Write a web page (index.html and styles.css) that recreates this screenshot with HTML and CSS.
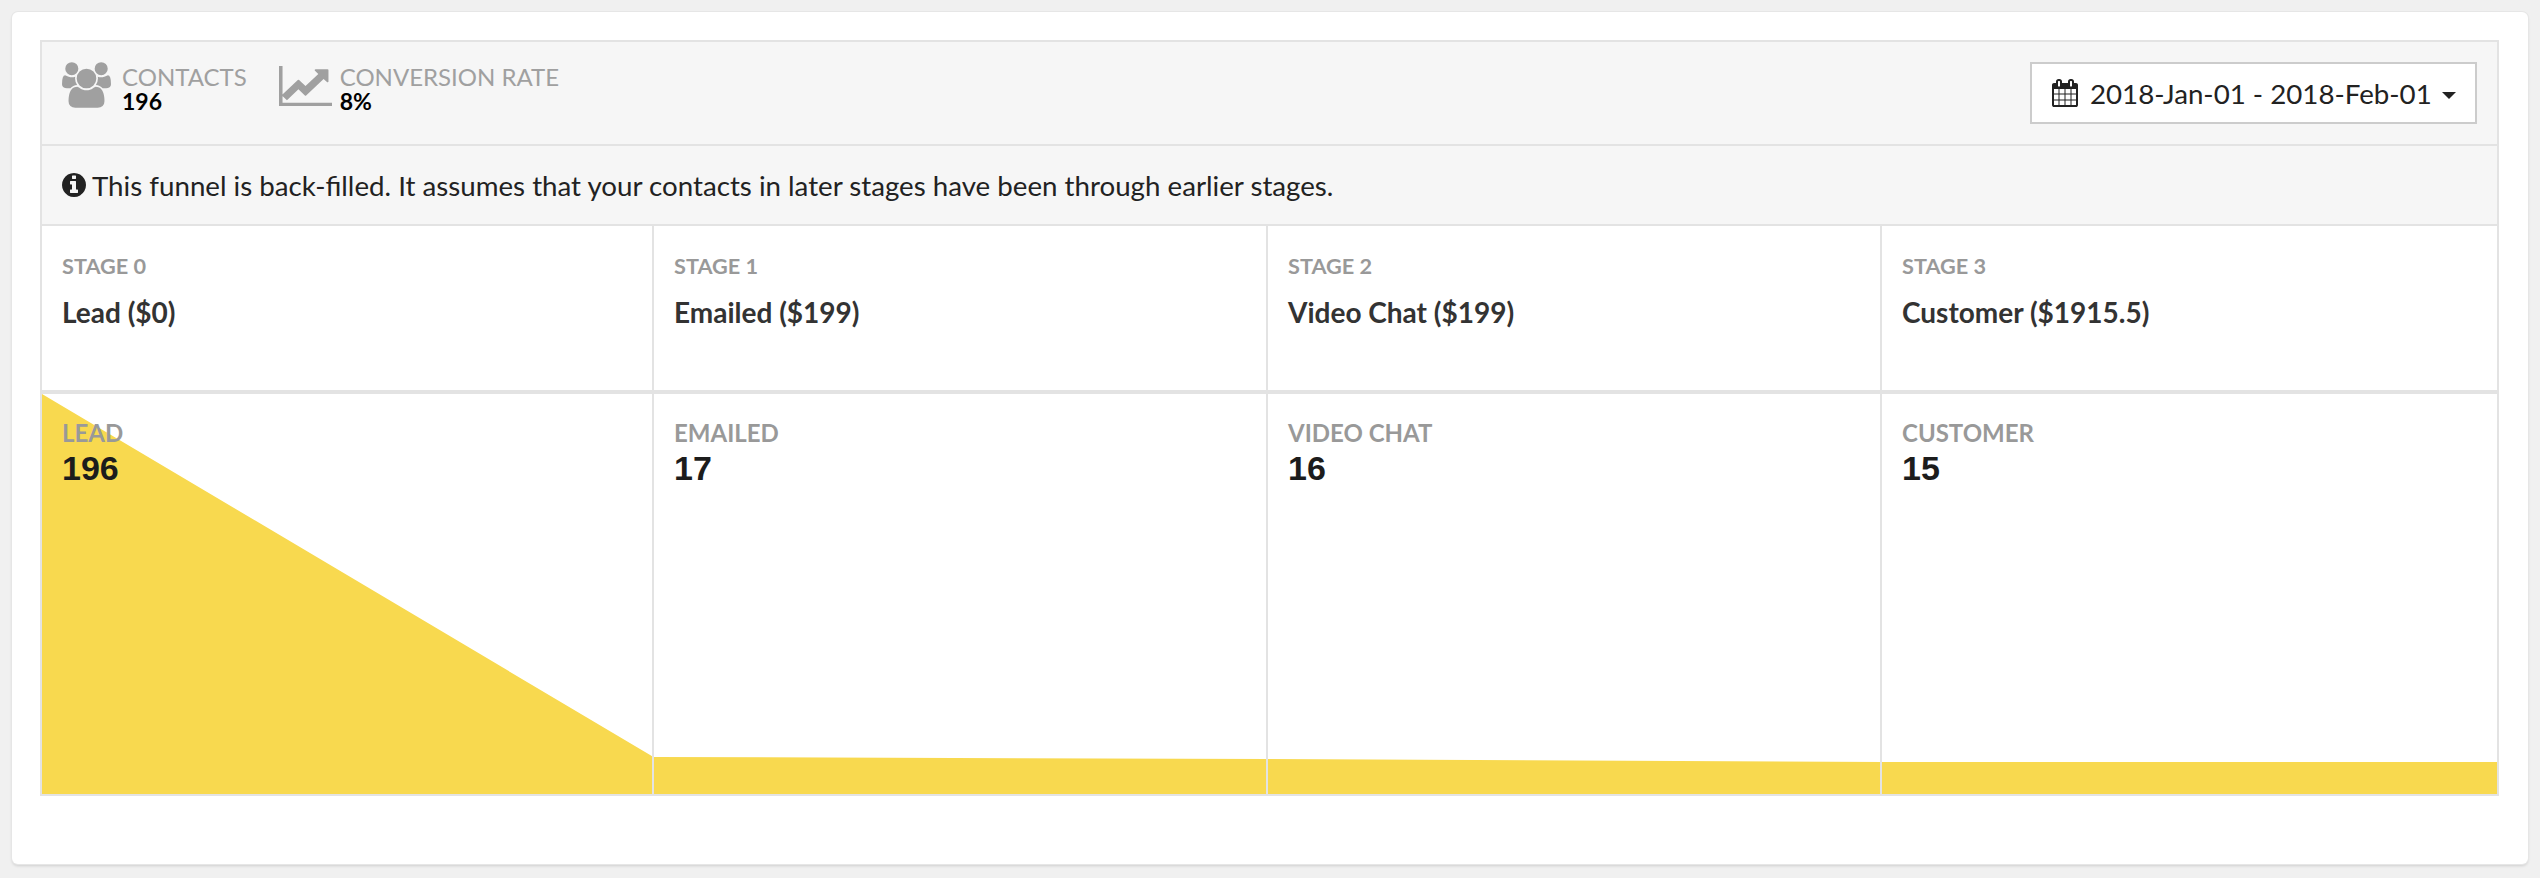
FILE: index.html
```html
<!DOCTYPE html>
<html lang="en">
<head>
<meta charset="utf-8">
<title>Funnel</title>
<link rel="stylesheet" href="styles.css">
</head>
<body>
<main class="card">
  <section class="box">
    <header class="toolbar">
      <div class="metrics">
        <div class="metric">
          <svg class="icon-users" viewBox="0 0 1920 1792"><path d="M593 896q-162 5-265 128h-134q-82 0-138-40.500t-56-118.500q0-353 124-353 6 0 43.500 21t97.500 42.500 119 21.500q67 0 133-23-5 37-5 66 0 139 81 256zm1071 637q0 120-73 189.500t-194 69.500h-874q-121 0-194-69.500t-73-189.500q0-53 3.500-103.500t14-109 26.500-108.500 43-97.500 62-81 85.500-53.500 111.500-20q10 0 43 21.500t73 48 107 48 135 21.500 135-21.500 107-48 73-48 43-21.500q61 0 111.500 20t85.500 53.500 62 81 43 97.500 26.500 108.500 14 109 3.500 103.500zm-1024-1277q0 106-75 181t-181 75-181-75-75-181 75-181 181-75 181 75 75 181zm704 384q0 159-112.500 271.500t-271.500 112.500-271.500-112.500-112.500-271.500 112.500-271.500 271.500-112.500 271.500 112.500 112.500 271.500zm576 225q0 78-56 118.500t-138 40.500h-134q-103-123-265-128 81-117 81-256 0-29-5-66 66 23 133 23 59 0 119-21.500t97.500-42.500 43.500-21q124 0 124 353zm-128-609q0 106-75 181t-181 75-181-75-75-181 75-181 181-75 181 75 75 181z"/></svg>
          <div class="metric-text"><span class="metric-label">CONTACTS</span><strong class="metric-value">196</strong></div>
        </div>
        <div class="metric">
          <svg class="icon-chart" viewBox="0 128 1920 1536" preserveAspectRatio="none"><path d="M1920 1536v128h-1920v-1536h128v1408h1792zm-128-1248v435q0 21-19.500 29.500t-35.500-7.500l-121-121-633 633q-10 10-23 10t-23-10l-233-233-416 416-192-192 585-585q10-10 23-10t23 10l233 233 464-464-121-121q-16-16-7.500-35.500t29.500-19.500h435q14 0 23 9t9 23z"/></svg>
          <div class="metric-text"><span class="metric-label">CONVERSION RATE</span><strong class="metric-value">8%</strong></div>
        </div>
      </div>
      <button class="date-button" type="button">
        <svg class="icon-calendar" viewBox="0 0 1664 1792"><path d="M128 1664h288v-288h-288v288zm352 0h320v-288h-320v288zm-352-352h288v-320h-288v320zm352 0h320v-320h-320v320zm-352-384h288v-288h-288v288zm736 736h320v-288h-320v288zm-384-736h320v-288h-320v288zm768 736h288v-288h-288v288zm-384-352h320v-320h-320v320zm-352-864v-288q0-13-9.500-22.500t-22.500-9.500h-64q-13 0-22.500 9.500t-9.500 22.500v288q0 13 9.500 22.500t22.500 9.500h64q13 0 22.500-9.500t9.500-22.500zm736 864h288v-320h-288v320zm-384-384h320v-288h-320v288zm384 0h288v-288h-288v288zm32-480v-288q0-13-9.500-22.500t-22.500-9.500h-64q-13 0-22.500 9.500t-9.500 22.500v288q0 13 9.500 22.500t22.500 9.500h64q13 0 22.500-9.500t9.500-22.500zm384-64v1280q0 52-38 90t-90 38h-1408q-52 0-90-38t-38-90v-1280q0-52 38-90t90-38h128v-96q0-66 47-113t113-47h64q66 0 113 47t47 113v96h384v-96q0-66 47-113t113-47h64q66 0 113 47t47 113v96h128q52 0 90 38t38 90z"/></svg>
        <span>2018-Jan-01 - 2018-Feb-01</span>
        <i class="caret"></i>
      </button>
    </header>
    <div class="notice">
      <svg class="icon-info" viewBox="0 128 1536 1536"><path d="M1024 1376v-160q0-14-9-23t-23-9h-96v-512q0-14-9-23t-23-9h-320q-14 0-23 9t-9 23v160q0 14 9 23t23 9h96v320h-96q-14 0-23 9t-9 23v160q0 14 9 23t23 9h448q14 0 23-9t9-23zm-128-896v-160q0-14-9-23t-23-9h-192q-14 0-23 9t-9 23v160q0 14 9 23t23 9h192q14 0 23-9t9-23zm640 416q0 209-103 385.500t-279.500 279.500-385.500 103-385.500-103-279.500-279.500-103-385.500 103-385.500 279.500-279.500 385.500-103 385.500 103 279.500 279.500 103 385.500z"/></svg>
      <span>This funnel is back-filled. It assumes that your contacts in later stages have been through earlier stages.</span>
    </div>
    <div class="stages">
      <div class="stage"><div class="stage-label">STAGE 0</div><div class="stage-name">Lead ($0)</div></div>
      <div class="stage"><div class="stage-label">STAGE 1</div><div class="stage-name">Emailed ($199)</div></div>
      <div class="stage"><div class="stage-label">STAGE 2</div><div class="stage-name">Video Chat ($199)</div></div>
      <div class="stage"><div class="stage-label">STAGE 3</div><div class="stage-name">Customer ($1915.5)</div></div>
    </div>
    <div class="chart">
      <svg class="funnel" viewBox="0 0 2453 400" preserveAspectRatio="none"><polygon points="0,0 611,363 1225,365 1839,368 2453,368 2453,400 0,400"/></svg>
      <div class="count"><div class="count-label">LEAD</div><div class="count-value">196</div></div>
      <div class="count"><div class="count-label">EMAILED</div><div class="count-value">17</div></div>
      <div class="count"><div class="count-label">VIDEO CHAT</div><div class="count-value">16</div></div>
      <div class="count"><div class="count-label">CUSTOMER</div><div class="count-value">15</div></div>
    </div>
  </section>
</main>
</body>
</html>
```
FILE: styles.css
```css
* { box-sizing: border-box; }
html, body { margin: 0; height: 100%; }
body {
  background: #f0f0f0;
  font-family: "Lato", "Liberation Sans", sans-serif;
  color: #222;
  padding: 12px 12px 14px 12px;
}
.card {
  height: 852px;
  background: #fff;
  border-radius: 6px;
  box-shadow: 0 0 0 1px #e6e6e6, 0 2px 3px rgba(0, 0, 0, 0.14);
  padding: 28px 29px 0 28px;
}
.box { border: 2px solid #e3e3e3; background: #fff; }
.toolbar {
  height: 104px;
  background: #f6f6f6;
  border-bottom: 2px solid #e3e3e3;
  display: flex;
  justify-content: space-between;
  align-items: flex-start;
  padding: 20px 20px 0;
}
.metrics { display: flex; gap: 32px; }
.metric { display: flex; gap: 11px; align-items: flex-start; }
.metric + .metric { gap: 8px; }
.metric svg { fill: #a0a0a0; display: block; flex: none; }
.icon-users { width: 49px; height: 46px; }
.icon-chart { width: 53px; height: 40px; margin-top: 4px; }
.metric-text { display: flex; flex-direction: column; margin-top: 2px; }
.metric-label { font-size: 24px; line-height: 26px; color: #a0a0a0; }
.metric-value { font-size: 23px; line-height: 22px; color: #000; font-weight: 700; }
.date-button {
  width: 447px;
  height: 62px;
  background: #fff;
  border: 2px solid #ccc;
  border-radius: 0;
  display: flex;
  align-items: center;
  padding: 0 0 0 20px;
  font: 400 27.7px "Lato", "Liberation Sans", sans-serif;
  color: #222;
}
.icon-calendar { width: 26px; height: 28px; fill: #222; margin-right: 12px; flex: none; }
.caret {
  margin: 4px 0 0 10px;
  border-top: 7px solid #222;
  border-left: 7.5px solid transparent;
  border-right: 7.5px solid transparent;
}
.notice {
  height: 80px;
  background: #f6f6f6;
  border-bottom: 2px solid #e3e3e3;
  display: flex;
  align-items: center;
  gap: 6px;
  padding: 0 20px;
  font-size: 27.7px;
  color: #222;
}
.icon-info { width: 24px; height: 24px; fill: #222; flex: none; }
.stages {
  display: grid;
  grid-template-columns: 612px 614px 614px 1fr;
  height: 168px;
  border-bottom: 4px solid #e3e3e3;
}
.stage { padding: 28px 20px 0; border-right: 2px solid #e3e3e3; }
.stage:last-child { border-right: 0; }
.stage-label { font-size: 21.7px; line-height: 24px; font-weight: 700; color: #999; }
.stage-name { font-size: 28px; line-height: 30px; font-weight: 700; color: #333; margin-top: 19px; }
.chart {
  position: relative;
  display: grid;
  grid-template-columns: 612px 614px 614px 1fr;
  height: 400px;
}
.funnel { position: absolute; inset: 0; width: 100%; height: 100%; fill: #f8d94f; display: block; }
.count { position: relative; padding: 26px 20px 0; border-right: 2px solid #e3e3e3; }
.count:last-child { border-right: 0; }
.count-label { font-size: 24px; line-height: 26px; font-weight: 700; color: #999; }
.count-value { font-family: "Liberation Sans", Arial, sans-serif; font-size: 34px; line-height: 38px; font-weight: 700; color: #1c1c1c; margin-top: 3px; }
```
